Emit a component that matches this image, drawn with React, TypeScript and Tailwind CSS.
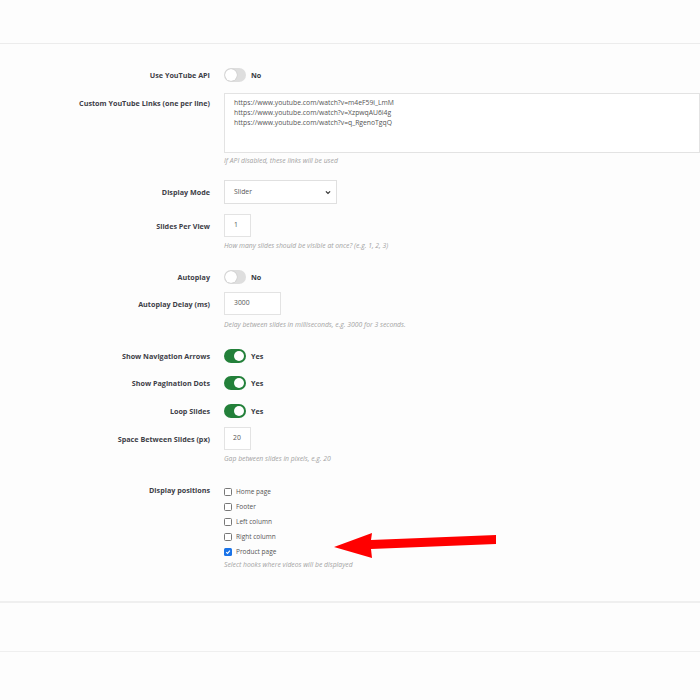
import React from "react";

const font = { fontFamily: '"Open Sans", "Noto Sans", sans-serif' };

function Toggle({ on }: { on: boolean }) {
  return (
    <div className="flex items-center">
      <div
        className={
          on
            ? "relative h-[14px] w-[22px] rounded-full bg-[#23803a]"
            : "relative h-[14px] w-[22px] rounded-full bg-[#dedede]"
        }
      >
        <div
          className={
            on
              ? "absolute top-[2px] left-[10px] h-[10px] w-[10px] rounded-full bg-white"
              : "absolute top-[1px] left-[1px] h-[12px] w-[12px] rounded-full bg-white shadow-[0_0_1px_rgba(0,0,0,0.3)]"
          }
        />
      </div>
      <span className="ml-[5px] text-[7.2px] font-bold text-[#363a41]">{on ? "Yes" : "No"}</span>
    </div>
  );
}

function Label({ children }: { children: React.ReactNode }) {
  return (
    <div className="w-[210px] shrink-0 text-right text-[7.2px] font-bold text-[#3d4047] leading-[10px]">
      {children}
    </div>
  );
}

function Help({ children }: { children: React.ReactNode }) {
  return <div className="ml-[224px] text-[6.8px] italic leading-[10px] text-[#a3a3a3]">{children}</div>;
}

function Check({ label, checked }: { label: string; checked?: boolean }) {
  return (
    <div className="flex h-[15px] items-center">
      <div
        className={
          checked
            ? "flex h-[8px] w-[8px] items-center justify-center rounded-[1.5px] bg-[#1a73e8]"
            : "h-[8px] w-[8px] rounded-[1.5px] border border-[#777] bg-white"
        }
      >
        {checked && (
          <svg width="6" height="6" viewBox="0 0 10 10">
            <path d="M2 5.2 L4.2 7.4 L8.2 2.6" stroke="white" strokeWidth="1.8" fill="none" />
          </svg>
        )}
      </div>
      <span className="ml-[4px] text-[6.5px] text-[#555]">{label}</span>
    </div>
  );
}

export default function App() {
  return (
    <div className="relative min-h-[700px] w-[700px] overflow-hidden bg-[#fdfdfd]" style={font}>
      <div className="h-[44px] border-b border-[#ececec]" />
      <div className="pb-[31px]">
        {/* Use YouTube API */}
        <div className="mt-[24px] flex h-[14px] items-center">
          <Label>Use YouTube API</Label>
          <div className="ml-[14px]">
            <Toggle on={false} />
          </div>
        </div>
        {/* Custom links */}
        <div className="mt-[11px] flex">
          <div className="pt-[5px]">
            <Label>Custom YouTube Links (one per line)</Label>
          </div>
          <div className="ml-[14px] h-[60px] flex-1 border border-[#e3e3e3] bg-white pl-[9px] pt-[4px] text-[6.8px] leading-[10px] text-[#555]">
            <div>https://www.youtube.com/watch?v=m4eF59i_LmM</div>
            <div>https://www.youtube.com/watch?v=XzpwqAU6i4g</div>
            <div>https://www.youtube.com/watch?v=q_RgenoTgqQ</div>
          </div>
        </div>
        <div className="mt-[3px]">
          <Help>If API disabled, these links will be used</Help>
        </div>
        {/* Display Mode */}
        <div className="mt-[14px] flex h-[24px] items-center">
          <Label>Display Mode</Label>
          <div className="ml-[14px] flex h-[24px] w-[113px] items-center justify-between border border-[#e0e0e0] bg-white pl-[9px] pr-[5px] text-[6.8px] text-[#555]">
            <span>Slider</span>
            <svg width="6" height="5" viewBox="0 0 10 8">
              <path d="M1.5 2 L5 5.5 L8.5 2" stroke="#333" strokeWidth="2" fill="none" />
            </svg>
          </div>
        </div>
        {/* Slides per view */}
        <div className="mt-[10px] flex h-[23px] items-center">
          <Label>Slides Per View</Label>
          <div className="ml-[14px] flex h-[23px] w-[27px] items-center border border-[#e3e3e3] bg-white pl-[9px] text-[6.8px] text-[#555]">
            1
          </div>
        </div>
        <div className="mt-[4px]">
          <Help>How many slides should be visible at once? (e.g. 1, 2, 3)</Help>
        </div>
        {/* Autoplay */}
        <div className="mt-[19px] flex h-[14px] items-center">
          <Label>Autoplay</Label>
          <div className="ml-[14px]">
            <Toggle on={false} />
          </div>
        </div>
        <div className="mt-[8px] flex h-[23px] items-center">
          <Label>Autoplay Delay (ms)</Label>
          <div className="ml-[14px] flex h-[23px] w-[57px] items-center border border-[#e3e3e3] bg-white pl-[9px] text-[6.8px] text-[#555]">
            3000
          </div>
        </div>
        <div className="mt-[5px]">
          <Help>Delay between slides in milliseconds, e.g. 3000 for 3 seconds.</Help>
        </div>
        {/* Nav arrows */}
        <div className="mt-[19px] flex h-[14px] items-center">
          <Label>Show Navigation Arrows</Label>
          <div className="ml-[14px]">
            <Toggle on />
          </div>
        </div>
        <div className="mt-[13px] flex h-[14px] items-center">
          <Label>Show Pagination Dots</Label>
          <div className="ml-[14px]">
            <Toggle on />
          </div>
        </div>
        <div className="mt-[14px] flex h-[14px] items-center">
          <Label>Loop Slides</Label>
          <div className="ml-[14px]">
            <Toggle on />
          </div>
        </div>
        <div className="mt-[9px] flex h-[23px] items-center">
          <Label>Space Between Slides (px)</Label>
          <div className="ml-[14px] flex h-[23px] w-[27px] items-center border border-[#e3e3e3] bg-white pl-[8px] text-[6.8px] text-[#555]">
            20
          </div>
        </div>
        <div className="mt-[4px]">
          <Help>Gap between slides in pixels, e.g. 20</Help>
        </div>
        {/* Display positions */}
        <div className="mt-[20px] flex">
          <div className="pt-[1px]">
            <Label>Display positions</Label>
          </div>
          <div className="ml-[14px]">
            <Check label="Home page" />
            <Check label="Footer" />
            <Check label="Left column" />
            <Check label="Right column" />
            <Check label="Product page" checked />
          </div>
        </div>
        <div className="mt-[1px]">
          <Help>Select hooks where videos will be displayed</Help>
        </div>
      </div>
      <div className="h-[51px] border-t-2 border-b border-[#efefef]" />

      <svg
        className="absolute left-0 top-0"
        width="700"
        height="700"
        viewBox="0 0 700 700"
      >
        <polygon
          points="334,547 372,533 371,540 496,535 496,544 371,549 372,558"
          fill="#ff0000"
        />
      </svg>
    </div>
  );
}
